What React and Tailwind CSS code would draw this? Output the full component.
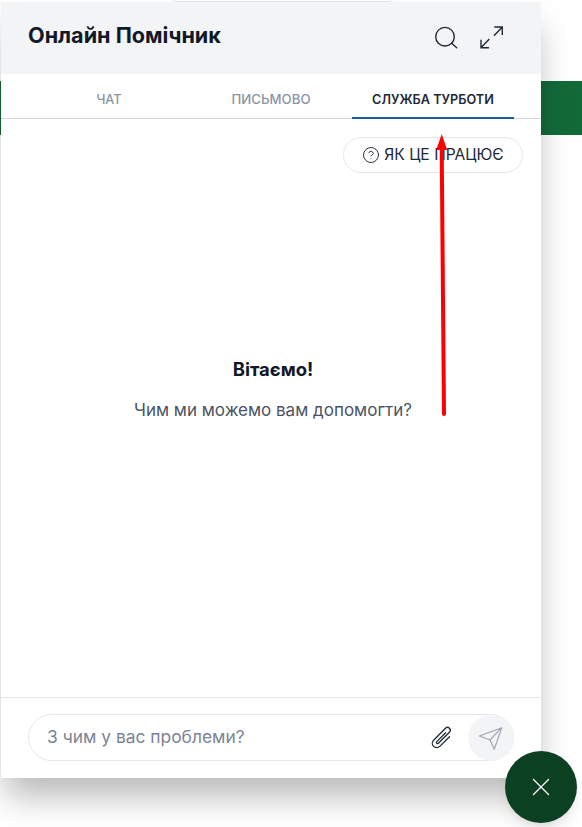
import { X, CircleHelp } from 'lucide-react';

function SearchIcon() {
  return (
    <svg width="26" height="26" viewBox="0 0 26 26" fill="none" stroke="#1f2937" strokeWidth="1.4" strokeLinecap="round">
      <circle cx="11" cy="11.7" r="9.3" />
      <path d="M17.7 18.3 L22.7 22.8" />
    </svg>
  );
}

function ExpandIcon() {
  return (
    <svg width="26" height="26" viewBox="0 0 26 26" fill="none" stroke="#1f2937" strokeWidth="1.4">
      <path d="M16.3 2 H24.3 V10 M24.3 2 L16 10.7" />
      <path d="M3 14.7 V22.7 H11 M3 22.7 L11.3 14" />
    </svg>
  );
}

function ClipIcon() {
  return (
    <svg width="30" height="30" viewBox="0 0 24 24" fill="none" stroke="#1f2937" strokeWidth="1.05" strokeLinecap="round">
      <g transform="rotate(45 12 12)">
        <path d="M15.5 7 V18 a3.5 3.5 0 0 1 -7 0 V4.5 a2.2 2.2 0 0 1 4.4 0 V17 a0.9 0.9 0 0 1 -1.8 0 V7" />
      </g>
    </svg>
  );
}

function SendIcon() {
  return (
    <svg width="46" height="46" viewBox="0 0 46 46" fill="none" stroke="#9ca3af" strokeWidth="1.1" strokeLinejoin="round">
      <path d="M33.7 12.7 L11.3 21 L22 25 L26.3 34.3 Z M22 25 L33.7 12.7" />
    </svg>
  );
}

export default function App() {
  return (
    <div className="relative w-[582px] h-[827px] overflow-hidden bg-white font-['Inter','Noto_Sans',sans-serif]">
      {/* page behind the widget */}
      <div className="absolute left-0 right-0 top-[81px] h-[54px] bg-[#136a39]" />
      <div className="absolute left-[170px] top-[-10px] h-3 w-[225px] rounded-b-md border border-gray-200" />

      {/* chat panel */}
      <div className="relative ml-px mt-[2px] flex h-[776px] w-[540px] flex-col bg-white shadow-[0_22px_32px_-4px_rgba(0,0,0,0.28)]">
        <div className="flex h-[72px] items-center justify-between bg-gray-100 pl-[27px] pr-[37px]">
          <h1 className="mb-1.5 text-[21.6px] font-bold text-[#111827]">Онлайн Помічник</h1>
          <div className="flex items-center gap-[18px]">
            <SearchIcon />
            <ExpandIcon />
          </div>
        </div>

        <div className="flex h-[45px] border-b border-gray-300 px-[27px] text-[12.7px] font-medium">
          <div className="flex w-[162px] items-center justify-center pt-2 text-[#8a94a6]">ЧАТ</div>
          <div className="flex w-[162px] items-center justify-center pt-2 text-[13.2px] text-[#8a94a6]">ПИСЬМОВО</div>
          <div className="-mb-px flex w-[162px] items-center justify-center border-b-2 border-[#14609c] pt-2 font-semibold text-[#1f2937]">СЛУЖБА ТУРБОТИ</div>
        </div>

        <div className="flex flex-1 flex-col">
          <div className="flex justify-end pr-[18px] pt-[18px]">
            <div className="flex h-[36px] w-[180px] items-center justify-center gap-[4px] rounded-full border border-gray-200 text-[15.6px] text-[#1f2937]">
              <CircleHelp size={18} strokeWidth={1.25} />
              <span>ЯК ЦЕ ПРАЦЮЄ</span>
            </div>
          </div>
          <div className="flex flex-1 flex-col items-center pl-1 pt-[183px]">
            <h2 className="text-[18.5px] font-bold text-[#111827]">Вітаємо!</h2>
            <p className="mt-[14px] text-[17px] text-[#4b5563]">Чим ми можемо вам допомогти?</p>
          </div>
        </div>

        <div className="flex h-[81px] items-start border-t border-gray-200 px-[27px] pt-[16px]">
          <div className="flex h-[47px] w-[486px] items-center justify-between rounded-full border border-gray-200 pl-[18px]">
            <span className="text-[17.4px] text-[#7b8594]">З чим у вас проблеми?</span>
            <div className="-mr-px flex items-center gap-[11px]">
              <ClipIcon />
              <div className="flex h-[46px] w-[46px] items-center justify-center rounded-full bg-gray-100">
                <SendIcon />
              </div>
            </div>
          </div>
        </div>
      </div>

      {/* close button */}
      <div className="absolute left-[505px] top-[751px] flex h-[72px] w-[72px] items-center justify-center rounded-full bg-[#0b4023] shadow-lg">
        <X size={30} strokeWidth={1} className="text-white" />
      </div>

      {/* red annotation arrow */}
      <svg className="absolute left-0 top-0 pointer-events-none" width="582" height="827">
        <path d="M444 414 L441.7 148" stroke="#ff0000" strokeWidth="4" strokeLinecap="round" fill="none" />
        <path d="M441.7 134 L447.2 150 L436.2 150 Z" fill="#ff0000" />
      </svg>
    </div>
  );
}
